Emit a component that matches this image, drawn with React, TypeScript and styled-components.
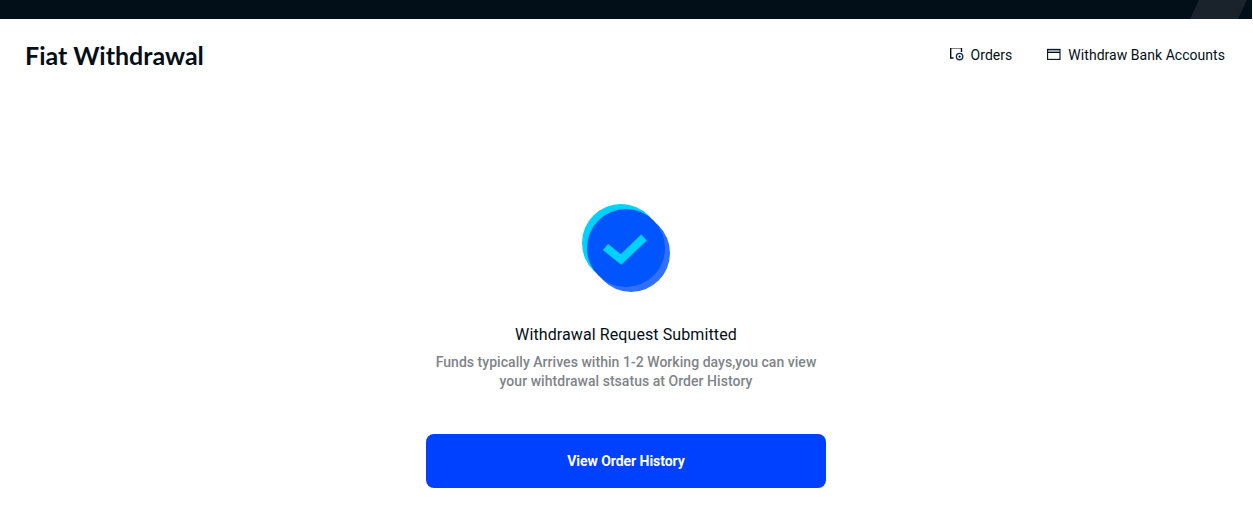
import React from "react";
import styled, { createGlobalStyle } from "styled-components";

const Global = createGlobalStyle`
  html, body { margin: 0; padding: 0; background: #fff; }
  body { font-family: Roboto, "Liberation Sans", sans-serif; }
`;

const Page = styled.div`
  width: 1252px;
  height: 509px;
  overflow: hidden;
  display: flex;
  flex-direction: column;
`;

const TopBar = styled.div`
  height: 19px;
  width: 1253px;
  flex: none;
  background: #030f18;
  display: flex;
  justify-content: flex-end;
  padding-right: 6px;
  box-sizing: border-box;
`;

const TopAccent = styled.div`
  width: 57px;
  background: #1a222b;
  clip-path: polygon(9px 0, 100% 0, 48px 100%, 0 100%);
`;

const Header = styled.header`
  height: 72px;
  flex: none;
  display: flex;
  align-items: center;
  justify-content: space-between;
  padding: 0 27px 0 25px;
  box-sizing: border-box;
`;

const Title = styled.h1`
  margin: 0;
  font-family: Lato, sans-serif;
  font-weight: 700;
  font-size: 25px;
  color: #030f18;
`;

const Links = styled.nav`
  display: flex;
  gap: 35px;
`;

const LinkItem = styled.a`
  display: flex;
  align-items: center;
  gap: 7px;
  font-size: 14px;
  letter-spacing: 0.04px;
  line-height: 20px;
  color: #030f18;
`;

const Main = styled.main`
  display: flex;
  flex-direction: column;
  align-items: center;
  padding-top: 113px;
`;

const Badge = styled.svg`
  width: 88px;
  height: 88px;
  display: block;
`;

const Heading = styled.h2`
  margin: 31px 0 0;
  font-size: 16px;
  font-weight: 400;
  letter-spacing: 0.1px;
  line-height: 24px;
  color: #030f18;
`;

const Description = styled.p`
  margin: 6px 0 0;
  width: 400px;
  font-size: 14px;
  font-weight: 500;
  letter-spacing: 0.04px;
  line-height: 19px;
  text-align: center;
  color: #7f8489;
`;

const PrimaryButton = styled.button`
  margin-top: 43px;
  width: 400px;
  height: 54px;
  border: 0;
  border-radius: 8px;
  background: #0041ff;
  color: #fff;
  font-family: inherit;
  font-size: 14px;
  font-weight: 700;
  letter-spacing: -0.05px;
`;

const OrdersIcon = () => (
  <svg width="14" height="14" viewBox="0 1 14 14" fill="none" stroke="#030f18">
    <path d="M3.5 11H0.7V0.7H11.5V5" strokeWidth="1.4" />
    <circle cx="9.6" cy="9.6" r="3.2" stroke="#16304f" strokeWidth="1.4" />
    <circle cx="9.6" cy="9.6" r="0.9" fill="#030f18" strokeWidth="0.4" />
  </svg>
);

const CardIcon = () => (
  <svg width="14" height="14" viewBox="0 0 14 14" fill="none">
    <rect x="1" y="2" width="11.6" height="2" fill="#a3a7ab" />
    <rect x="0.6" y="1.4" width="12.4" height="10" stroke="#030f18" strokeWidth="1.1" />
    <path d="M1 4.5H13" stroke="#030f18" strokeWidth="1" />
  </svg>
);

export default function App() {
  return (
    <Page>
      <Global />
      <TopBar>
        <TopAccent />
      </TopBar>
      <Header>
        <Title>Fiat Withdrawal</Title>
        <Links>
          <LinkItem>
            <OrdersIcon />
            Orders
          </LinkItem>
          <LinkItem>
            <CardIcon />
            Withdraw Bank Accounts
          </LinkItem>
        </Links>
      </Header>
      <Main>
        <Badge viewBox="0 0 88 88">
          <circle cx="39" cy="39" r="39" fill="#00d2ff" />
          <circle cx="49" cy="49" r="39" fill="#3170ff" />
          <circle cx="44" cy="44" r="39" fill="#0055ff" />
          <path d="M23.5 43 L39 55.5 L62 33.5" fill="none" stroke="#00d2ff" strokeWidth="8" strokeLinejoin="miter" />
        </Badge>
        <Heading>Withdrawal Request Submitted</Heading>
        <Description>
          Funds typically Arrives within 1-2 Working days,you can view
          <br />
          your wihtdrawal stsatus at Order History
        </Description>
        <PrimaryButton>View Order History</PrimaryButton>
      </Main>
    </Page>
  );
}
